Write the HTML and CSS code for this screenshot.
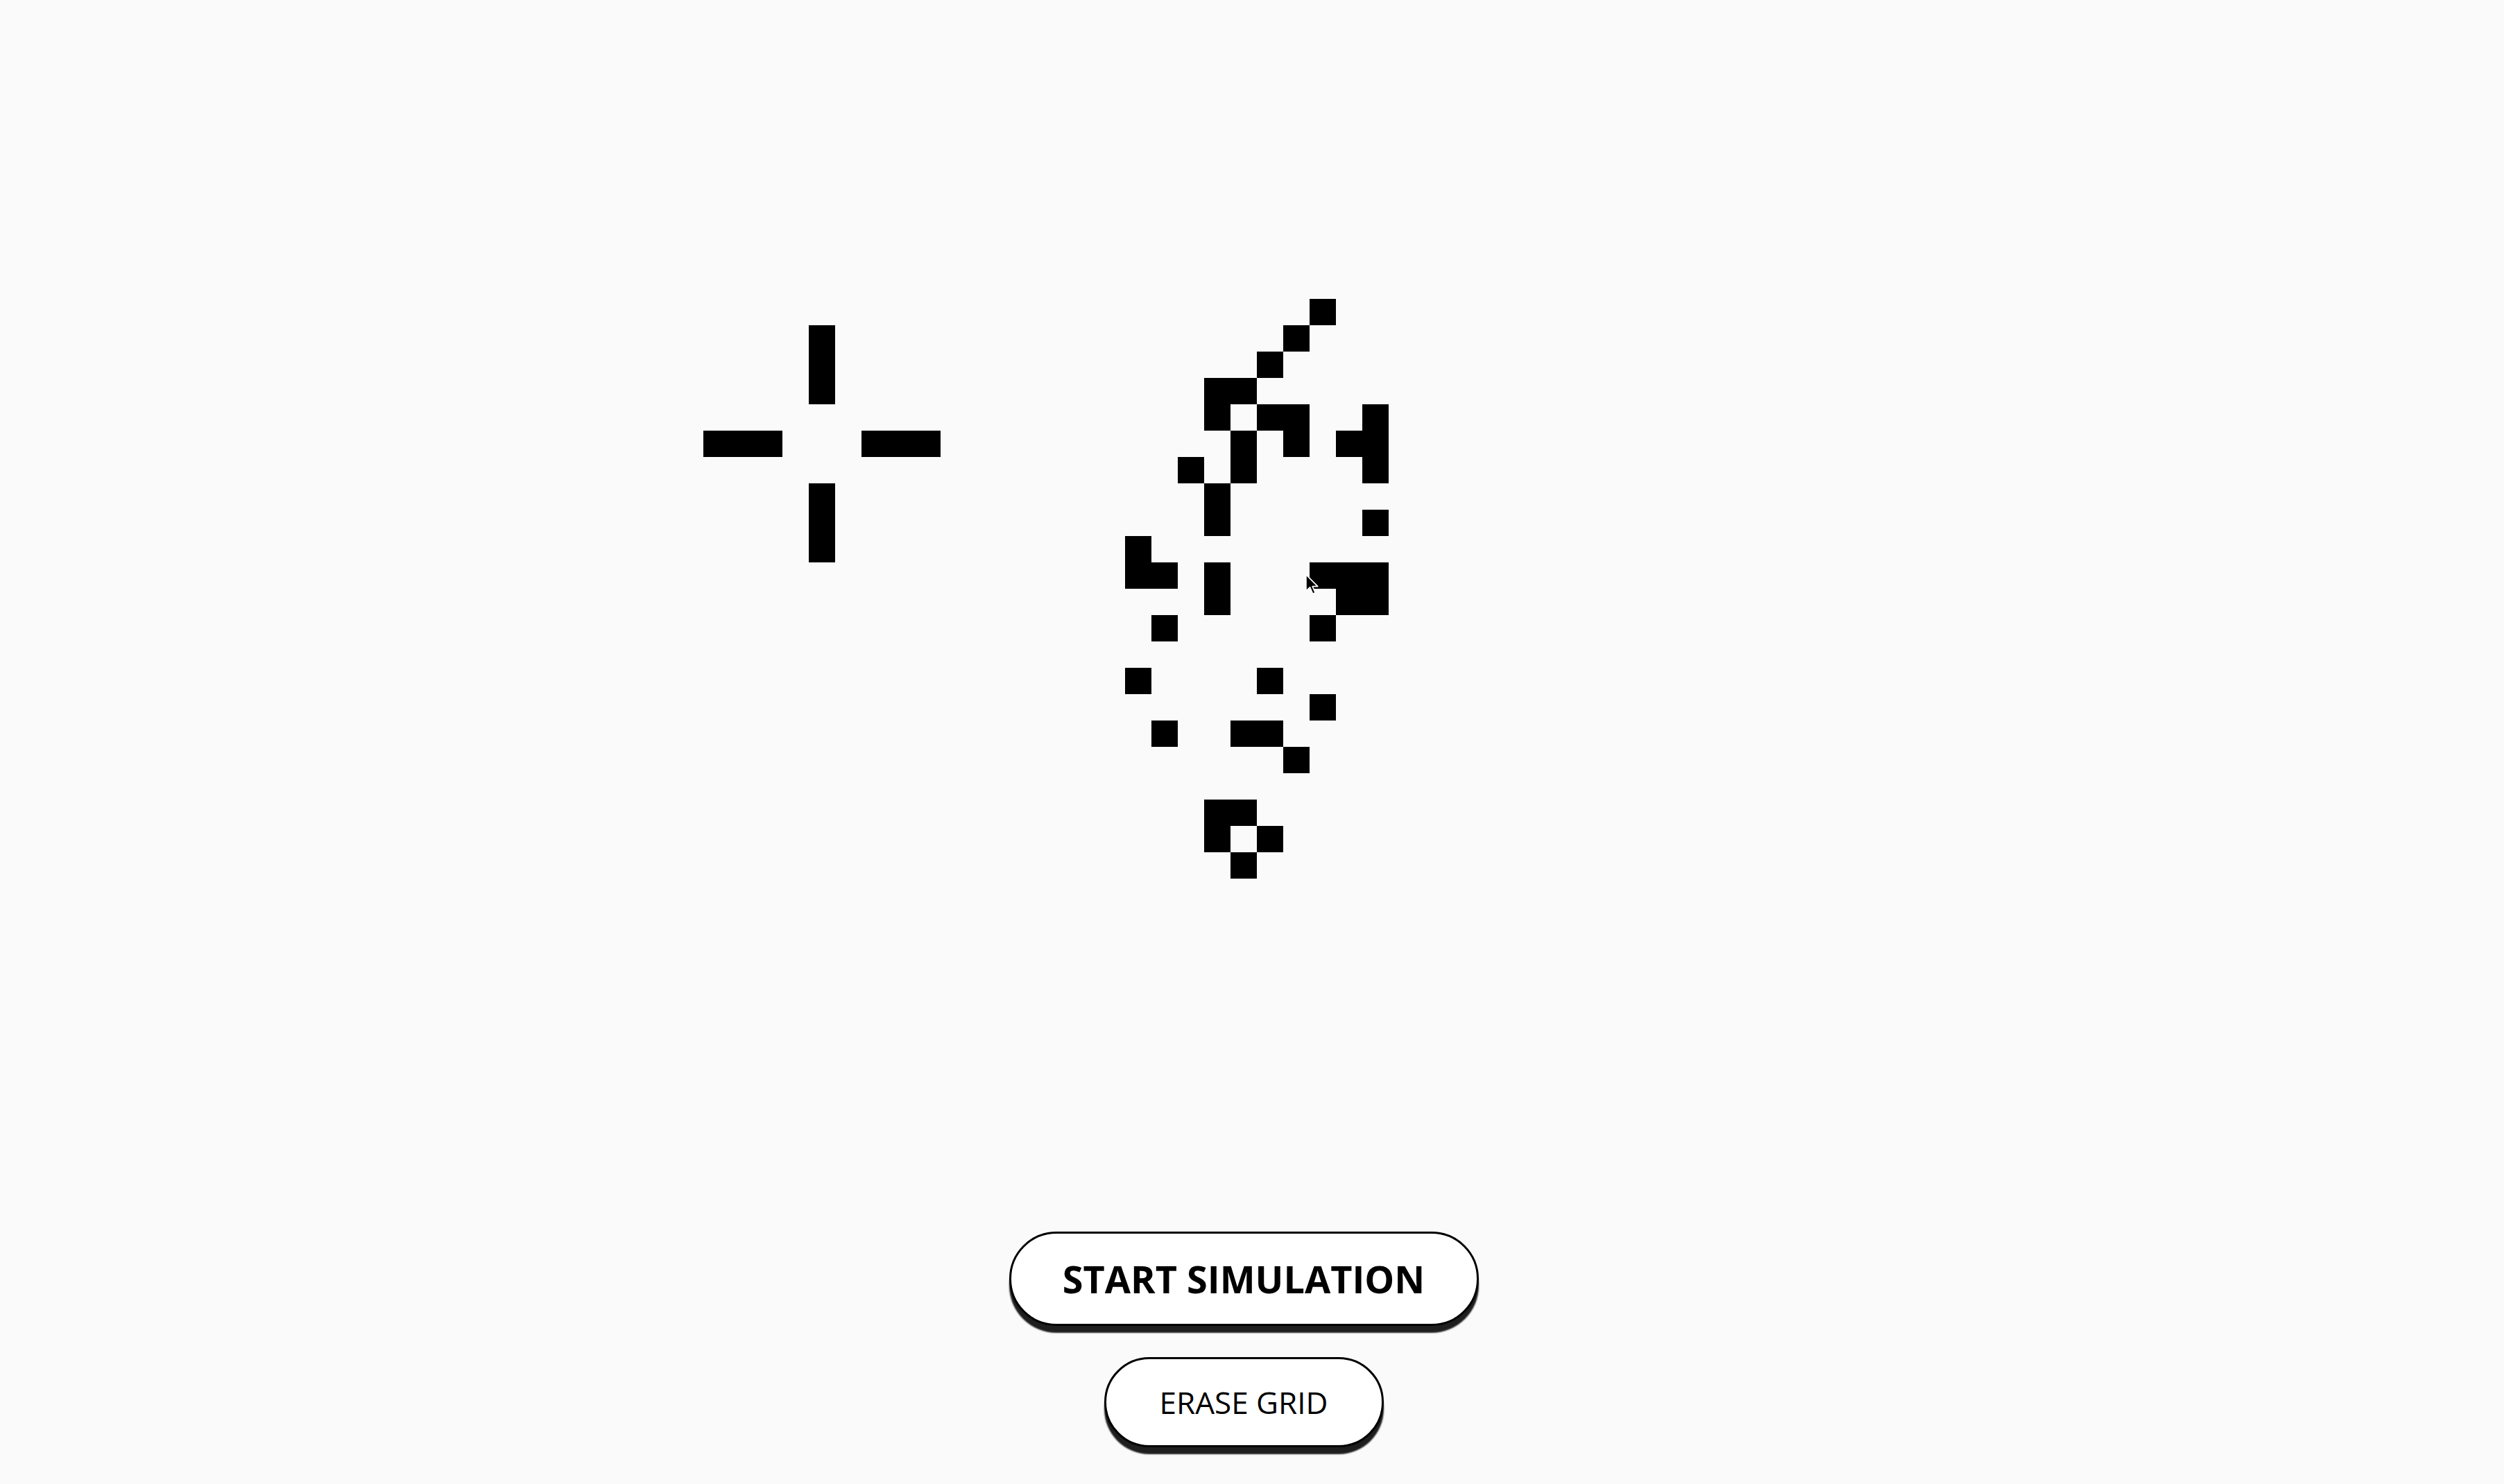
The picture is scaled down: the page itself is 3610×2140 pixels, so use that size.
FILE: index.html
```html
<!DOCTYPE html>
<html lang="en">
<head>
<meta charset="utf-8">
<title>Game of Life</title>
<link rel="stylesheet" href="styles.css">
</head>
<body>
<main class="page">
  <div class="board">
    <div class="cell" style="grid-column:5;grid-row:2"></div>
    <div class="cell" style="grid-column:5;grid-row:3"></div>
    <div class="cell" style="grid-column:5;grid-row:4"></div>
    <div class="cell" style="grid-column:1;grid-row:6"></div>
    <div class="cell" style="grid-column:2;grid-row:6"></div>
    <div class="cell" style="grid-column:3;grid-row:6"></div>
    <div class="cell" style="grid-column:7;grid-row:6"></div>
    <div class="cell" style="grid-column:8;grid-row:6"></div>
    <div class="cell" style="grid-column:9;grid-row:6"></div>
    <div class="cell" style="grid-column:5;grid-row:8"></div>
    <div class="cell" style="grid-column:5;grid-row:9"></div>
    <div class="cell" style="grid-column:5;grid-row:10"></div>

    <div class="cell" style="grid-column:24;grid-row:1"></div>
    <div class="cell" style="grid-column:23;grid-row:2"></div>
    <div class="cell" style="grid-column:22;grid-row:3"></div>
    <div class="cell" style="grid-column:20;grid-row:4"></div>
    <div class="cell" style="grid-column:21;grid-row:4"></div>
    <div class="cell" style="grid-column:20;grid-row:5"></div>
    <div class="cell" style="grid-column:22;grid-row:5"></div>
    <div class="cell" style="grid-column:23;grid-row:5"></div>
    <div class="cell" style="grid-column:26;grid-row:5"></div>
    <div class="cell" style="grid-column:21;grid-row:6"></div>
    <div class="cell" style="grid-column:23;grid-row:6"></div>
    <div class="cell" style="grid-column:25;grid-row:6"></div>
    <div class="cell" style="grid-column:26;grid-row:6"></div>
    <div class="cell" style="grid-column:19;grid-row:7"></div>
    <div class="cell" style="grid-column:21;grid-row:7"></div>
    <div class="cell" style="grid-column:26;grid-row:7"></div>
    <div class="cell" style="grid-column:20;grid-row:8"></div>
    <div class="cell" style="grid-column:20;grid-row:9"></div>
    <div class="cell" style="grid-column:26;grid-row:9"></div>
    <div class="cell" style="grid-column:17;grid-row:10"></div>
    <div class="cell" style="grid-column:17;grid-row:11"></div>
    <div class="cell" style="grid-column:18;grid-row:11"></div>
    <div class="cell" style="grid-column:20;grid-row:11"></div>
    <div class="cell" style="grid-column:24;grid-row:11"></div>
    <div class="cell" style="grid-column:25;grid-row:11"></div>
    <div class="cell" style="grid-column:26;grid-row:11"></div>
    <div class="cell" style="grid-column:20;grid-row:12"></div>
    <div class="cell" style="grid-column:25;grid-row:12"></div>
    <div class="cell" style="grid-column:26;grid-row:12"></div>
    <div class="cell" style="grid-column:18;grid-row:13"></div>
    <div class="cell" style="grid-column:24;grid-row:13"></div>
    <div class="cell" style="grid-column:17;grid-row:15"></div>
    <div class="cell" style="grid-column:22;grid-row:15"></div>
    <div class="cell" style="grid-column:24;grid-row:16"></div>
    <div class="cell" style="grid-column:18;grid-row:17"></div>
    <div class="cell" style="grid-column:21;grid-row:17"></div>
    <div class="cell" style="grid-column:22;grid-row:17"></div>
    <div class="cell" style="grid-column:23;grid-row:18"></div>
    <div class="cell" style="grid-column:20;grid-row:20"></div>
    <div class="cell" style="grid-column:21;grid-row:20"></div>
    <div class="cell" style="grid-column:20;grid-row:21"></div>
    <div class="cell" style="grid-column:22;grid-row:21"></div>
    <div class="cell" style="grid-column:21;grid-row:22"></div>

    <svg class="cursor" width="22" height="32" viewBox="0 0 13 19.4" aria-hidden="true">
      <path d="M1 1 L1 15.2 L4.4 12 L6.9 17.8 L9.1 16.9 L6.6 11.3 L11.2 11.3 Z" fill="#000" stroke="#fff" stroke-width="1" stroke-linejoin="round"/>
    </svg>
  </div>

  <div class="controls">
    <button class="btn btn-primary" type="button">START SIMULATION</button>
    <button class="btn btn-secondary" type="button">ERASE GRID</button>
  </div>
</main>
</body>
</html>
```

FILE: styles.css
```css
html, body {
  margin: 0;
  padding: 0;
  background: #fafafa;
}

body {
  font-family: "Open Sans", "Noto Sans", sans-serif;
  color: #000;
}

.page {
  width: 3586px;
  height: 2140px;
  box-sizing: border-box;
  padding-top: 431px;
  display: flex;
  flex-direction: column;
  align-items: center;
}

.board {
  position: relative;
  display: grid;
  grid-template-columns: repeat(41, 38px);
  grid-template-rows: repeat(22, 38px);
}

.cell {
  background: #000;
}

.cursor {
  position: absolute;
  left: 867px;
  top: 396px;
}

.controls {
  margin-top: 509px;
  display: flex;
  flex-direction: column;
  align-items: center;
  gap: 45px;
}

.btn {
  display: inline-flex;
  align-items: center;
  justify-content: center;
  box-sizing: border-box;
  background: #fff;
  border: 3px solid #000;
  border-radius: 999px;
  box-shadow: 0 10px 2px #1e1e1e;
  color: #000;
  font-family: "Open Sans", "Noto Sans", sans-serif;
  padding: 0;
  cursor: pointer;
}

.btn-primary {
  width: 677px;
  height: 136px;
  font-size: 54px;
  font-weight: 700;
}

.btn-secondary {
  width: 403px;
  height: 130px;
  font-size: 44px;
  font-weight: 400;
}
```
